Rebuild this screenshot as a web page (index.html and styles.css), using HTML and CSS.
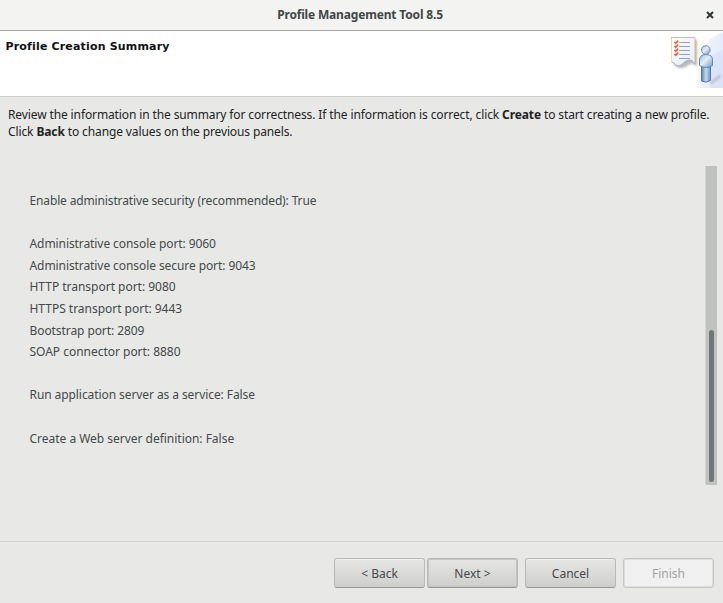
FILE: index.html
```html
<!DOCTYPE html>
<html lang="en">
<head>
<meta charset="utf-8">
<title>Profile Management Tool 8.5</title>
<link rel="stylesheet" href="styles.css">
</head>
<body>
<main class="window">
  <header class="titlebar">
    <span class="window-title">Profile Management Tool 8.5</span>
    <svg class="close" width="8" height="8" viewBox="0 0 8 8"><path d="M1 1 7 7M7 1 1 7"/></svg>
  </header>
  <section class="banner">
    <h1>Profile Creation Summary</h1>
    <svg class="banner-art" width="60" height="57" viewBox="0 0 60 57">
      <defs>
        <linearGradient id="sky" gradientUnits="userSpaceOnUse" x1="32" y1="30" x2="60" y2="36"><stop offset="0" stop-color="#fff"/><stop offset=".45" stop-color="#edf1fc"/><stop offset="1" stop-color="#e0e8fa"/></linearGradient>
        <linearGradient id="body" x1="0" x2="1" y1="0" y2="1"><stop offset="0" stop-color="#9db8d5"/><stop offset=".45" stop-color="#e3eef6"/><stop offset="1" stop-color="#7498c2"/></linearGradient>
        <linearGradient id="legs" x1="0" x2="1"><stop offset="0" stop-color="#5a82b2"/><stop offset=".5" stop-color="#c5dbed"/><stop offset="1" stop-color="#7197c0"/></linearGradient>
        <linearGradient id="paper" x1="0" x2="1" y1="0" y2="1"><stop offset="0" stop-color="#fff"/><stop offset="1" stop-color="#e4ebf7"/></linearGradient>
        <filter id="soft" x="-30%" y="-30%" width="160%" height="160%"><feGaussianBlur stdDeviation="1.2"/></filter>
      </defs>
      <path d="M60 1Q43 8 34 22V57H60Z" fill="url(#sky)"/>
      <path d="M60 19 47 25V57H60Z" fill="#d5e0f7" opacity=".6"/>
      <path d="M11 9H34V36Q30 30 24 35 17 40 11 34Z" fill="#777" opacity=".5" filter="url(#soft)"/>
      <path d="M46 52 57 43 58 46 49 53Z" fill="#ad9bb6" opacity=".55" filter="url(#soft)"/>
      <path d="M8.500 6.500H32V33C27 25 22 31 18 34 13 37 12 31 8.500 31Z" fill="url(#paper)"/>
      <path d="M8.500 31V6.500" fill="none" stroke="#ead8c2"/>
      <path d="M8 6.500H32V32" fill="none" stroke="#e7b66e"/>
      <path d="M8.500 31C12 31 13 37 18 34 22 31 27 25 32 33" fill="none" stroke="#9badc7"/>
      <path d="M16 11.500H27M16 15.500H27M16 19.500H27M16 23.500H27M16 27.500H27" stroke="#8da5c8"/>
      <path d="m11.500 11 1.200 1.200 2.500-2.500m-3.700 5.300 1.200 1.200 2.500-2.500m-3.700 5.300 1.200 1.200 2.500-2.500m-3.700 5.300 1.200 1.200 2.500-2.500" fill="none" stroke="#e66632" stroke-width="1.700"/>
      <path d="M38.500 35H47.500V49.500Q43 52.500 38.500 50Z" fill="url(#legs)" stroke="#4f79aa"/>
      <path d="M36.500 29Q36.500 23.500 43 23.500T49.500 29V34.500Q43 38.500 36.500 34.500Z" fill="url(#body)" stroke="#6288b3"/>
      <circle cx="42.800" cy="19" r="4.300" fill="url(#body)" stroke="#6b90b9"/>
    </svg>
  </section>
  <section class="content">
    <p class="intro">Review the information in the summary for correctness. If the information is correct, click <b>Create</b> to start creating a new profile.<br>Click <b>Back</b> to change values on the previous panels.</p>
    <div class="scroll-area">
      <div class="summary">
        <p class="tight">Enable administrative security (recommended): True</p>
        <p class="gap">Administrative console port: 9060</p>
        <p>Administrative console secure port: 9043</p>
        <p class="wide">HTTP transport port: 9080</p>
        <p class="wide">HTTPS transport port: 9443</p>
        <p>Bootstrap port: 2809</p>
        <p class="wide">SOAP connector port: 8880</p>
        <p class="gap">Run application server as a service: False</p>
        <p class="gap wide">Create a Web server definition: False</p>
      </div>
      <div class="scrollbar"><div class="thumb"></div></div>
    </div>
  </section>
  <footer class="actions">
    <button>&lt; Back</button>
    <button class="next">Next &gt;</button>
    <button class="cancel">Cancel</button>
    <button class="finish" disabled>Finish</button>
  </footer>
</main>
</body>
</html>
```
FILE: styles.css
```css
* { box-sizing: border-box; }
body { margin: 0; background: #e8e8e6; font: 12px "Noto Sans", sans-serif; }
p, h1 { margin: 0; }
.window { width: 723px; height: 603px; display: flex; flex-direction: column; overflow: hidden; }
.titlebar { flex: none; height: 31px; display: grid; grid-template-columns: 1fr auto 1fr; align-items: center; padding: 0 9px 1px 6px; background: #f3f3f2; border-bottom: 1px solid #a9aca2; color: #414748; }
.window-title { grid-column: 2; font-weight: 700; font-size: 12px; letter-spacing: -.17px; }
.close { justify-self: end; }
.close path { fill: none; stroke: #2e3436; stroke-width: 2; }
.banner { flex: none; height: 66px; display: flex; justify-content: space-between; background: #fff; border-bottom: 1px solid #cfcfcd; }
h1 { padding: 8px 0 0 5.500px; font: bold 11px/15px "DejaVu Sans", sans-serif; letter-spacing: .17px; color: #111; }
.content { flex: 1; }
.intro { padding: 9px 0 0 8px; line-height: 17px; letter-spacing: -.117px; color: #202424; white-space: nowrap; }
.scroll-area { height: 319px; margin: 26px 6px 0 0; display: flex; justify-content: space-between; }
.summary { padding: 24px 0 0 29.500px; color: #444a4c; line-height: 21.600px; letter-spacing: -.08px; white-space: nowrap; }
.gap { margin-top: 21.600px; }
.tight { letter-spacing: -.14px; }
.wide { letter-spacing: -.02px; }
.scrollbar { width: 12px; padding: 164px 3px 3px 3px; background: #c0c2c0; border-left: 1px solid #d2d3d1; }
.thumb { width: 5px; height: 152px; background: #717777; border-radius: 3px; }
.actions { flex: none; height: 62px; display: flex; border-top: 1px solid #d3d3d1; padding: 16px 8px 0 334px; }
button { width: 91px; height: 30px; padding: 1px 0 0; margin-right: 2px; border: 1px solid #b9bab6; border-bottom-color: #969791; border-radius: 3px; background: linear-gradient(#e6e6e5, #cececc); box-shadow: inset 0 1px #f0f0ef; font: 12px "Noto Sans", sans-serif; color: #454b4d; }
.next { box-shadow: inset 0 0 0 1px #c3c4c1; margin-right: 7px; }
.cancel { margin-right: 7px; }
.finish { margin-right: 0; background: #f0f0f0; color: #a0a3a3; border-color: #c5c6c3; box-shadow: inset 0 0 0 1px #dededc; }
```
